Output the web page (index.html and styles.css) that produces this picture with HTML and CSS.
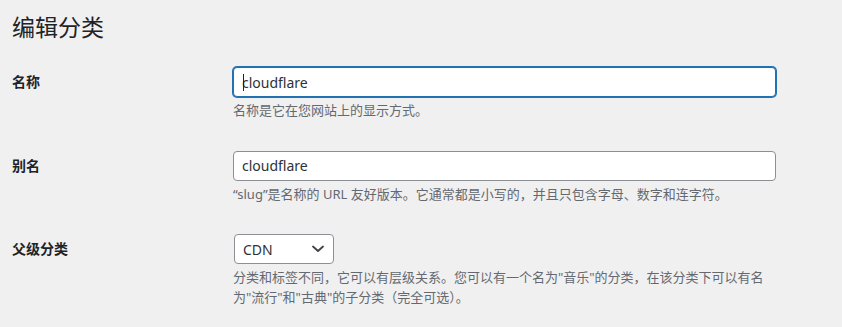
FILE: index.html
```html
<!DOCTYPE html>
<html lang="zh-CN">
<head>
<meta charset="utf-8">
<title>编辑分类</title>
<link rel="stylesheet" href="styles.css">
</head>
<body>
<div class="wrap">
  <h1 class="page-title">编辑分类</h1>
  <form class="edit-form">
    <div class="form-row">
      <label class="field-label" for="name">名称</label>
      <div class="field">
        <div class="input-wrap">
          <input class="text-input is-focused" id="name" type="text" value="cloudflare">
          <span class="caret"></span>
        </div>
        <p class="description">名称是它在您网站上的显示方式。</p>
      </div>
    </div>
    <div class="form-row">
      <label class="field-label" for="slug">别名</label>
      <div class="field">
        <input class="text-input" id="slug" type="text" value="cloudflare">
        <p class="description">“slug”是名称的 URL 友好版本。它通常都是小写的，并且只包含字母、数字和连字符。</p>
      </div>
    </div>
    <div class="form-row">
      <label class="field-label">父级分类</label>
      <div class="field">
        <div class="select-box">
          <span class="select-value">CDN</span>
          <svg class="chevron" width="12" height="8" viewBox="0 0 12 8" aria-hidden="true">
            <path d="M1 1.5 L6 6 L11 1.5" fill="none" stroke="#3c434a" stroke-width="1.8" stroke-linecap="round" stroke-linejoin="round"/>
          </svg>
        </div>
        <p class="description">分类和标签不同，它可以有层级关系。您可以有一个名为"音乐"的分类，在该分类下可以有名为"流行"和"古典"的子分类（完全可选）。</p>
      </div>
    </div>
  </form>
</div>
</body>
</html>
```

FILE: styles.css
```css
html, body {
  margin: 0;
  padding: 0;
  background: #f0f0f1;
}

body {
  font-family: "Noto Sans", "Noto Sans CJK SC", sans-serif;
  color: #1d2327;
  font-size: 13px;
}

.wrap {
  padding: 12px 0 0 12px;
}

.page-title {
  margin: 0;
  font-size: 23px;
  font-weight: 400;
  line-height: 30px;
  color: #1d2327;
}

.edit-form {
  margin-top: 10px;
}

.form-row {
  display: grid;
  grid-template-columns: 221px 543px;
  align-items: start;
  padding: 15px 0;
}

.field-label {
  font-size: 14px;
  font-weight: 600;
  line-height: 30px;
  color: #1d2327;
}

.field {
  display: flex;
  flex-direction: column;
  align-items: flex-start;
}

.input-wrap {
  position: relative;
  width: 100%;
}

.text-input {
  box-sizing: border-box;
  display: block;
  width: 543px;
  height: 30px;
  margin: 0;
  padding: 0 8px;
  border: 1px solid #8c8f94;
  border-radius: 4px;
  background: #fff;
  font-family: "Noto Sans", "Noto Sans CJK SC", sans-serif;
  font-size: 14px;
  color: #2c3338;
  outline: none;
}

.text-input.is-focused {
  border-color: #2271b1;
  box-shadow: 0 0 0 1px #2271b1;
}

.caret {
  position: absolute;
  left: 10px;
  top: 7px;
  width: 1px;
  height: 17px;
  background: #1d2327;
}

.description {
  margin: 4px 0 0;
  font-size: 13px;
  line-height: 19.5px;
  color: #646970;
  width: 543px;
}

.select-box {
  box-sizing: border-box;
  display: flex;
  align-items: center;
  justify-content: space-between;
  width: 100px;
  height: 30px;
  margin-left: 1px;
  padding: 0 8px;
  border: 1px solid #8c8f94;
  border-radius: 4px;
  background: #fff;
  font-size: 14px;
  color: #2c3338;
}

.chevron {
  display: block;
  margin-right: 1px;
}
```
